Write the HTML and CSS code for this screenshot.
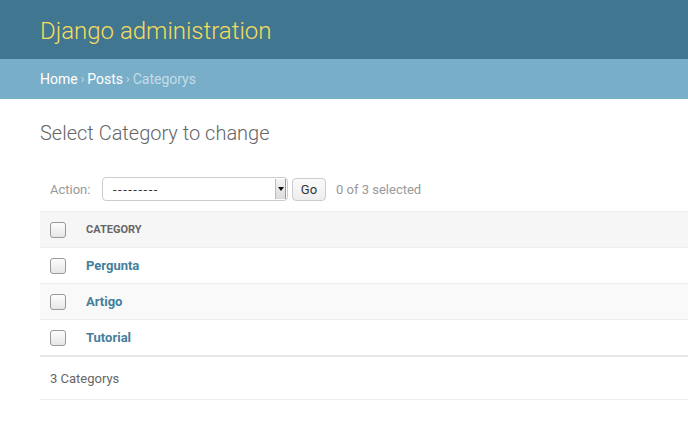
FILE: index.html
```html
<!DOCTYPE html>
<html>
<head>
<meta charset="utf-8">
<link rel="stylesheet" href="styles.css">
</head>
<body>
<div class="header">
  <h1 class="branding">Django administration</h1>
</div>
<div class="breadcrumbs">
  <a href="#">Home</a><span class="sep">›</span><a href="#">Posts</a><span class="sep">›</span><span class="current">Categorys</span>
</div>
<div class="content">
  <h1 class="title">Select Category to change</h1>
  <div class="actions">
    <label class="action-label">Action:</label>
    <div class="select">
      <span class="select-text">---------</span>
      <span class="select-btn"><span class="tri"></span></span>
    </div>
    <button class="go">Go</button>
    <span class="counter">0 of 3 selected</span>
  </div>
  <div class="results">
    <div class="row head"><span class="cb"><span class="box"></span></span><span class="col">CATEGORY</span></div>
    <div class="row"><span class="cb"><span class="box"></span></span><span class="col"><a href="#">Pergunta</a></span></div>
    <div class="row alt"><span class="cb"><span class="box"></span></span><span class="col"><a href="#">Artigo</a></span></div>
    <div class="row last"><span class="cb"><span class="box"></span></span><span class="col"><a href="#">Tutorial</a></span></div>
  </div>
  <p class="paginator">3 Categorys</p>
</div>
</body>
</html>
```

FILE: styles.css
```css
* { box-sizing: border-box; }
html, body { margin: 0; padding: 0; }
body {
  font-family: Roboto, "Liberation Sans", sans-serif;
  color: #333;
  background: #fff;
  font-size: 14px;
}
.header {
  height: 59px;
  background: #417690;
  padding: 0 40px;
  display: flex;
  align-items: center;
}
.branding {
  margin: 0;
  font-size: 24px;
  font-weight: 300;
  color: #f5dd5d;
  line-height: 30px;
  padding-top: 2px;
}
.breadcrumbs {
  height: 40px;
  background: #79aec8;
  padding: 0 40px;
  display: flex;
  align-items: center;
  font-size: 14px;
  color: #c4dce8;
}
.breadcrumbs a { color: #fff; text-decoration: none; }
.breadcrumbs .sep { margin: 0 3px; font-size: 12px; }
.content { padding: 20px 0 0 40px; }
.title {
  margin: 0 0 20px;
  font-size: 20px;
  font-weight: 300;
  color: #666;
  line-height: 28px;
}
.actions {
  height: 44px;
  padding: 0 10px;
  display: flex;
  align-items: center;
  font-size: 13px;
  color: #999;
}
.action-label { width: 52px; }
.select {
  width: 186px;
  height: 24px;
  border: 1px solid #ccc;
  border-radius: 4px;
  display: flex;
  align-items: center;
  justify-content: space-between;
  background: #fff;
  overflow: hidden;
}
.select-text { color: #333; padding-left: 10px; font-size: 13px; letter-spacing: 1.5px; }
.select-btn {
  width: 11px;
  height: 20px;
  margin-right: 1px;
  background: linear-gradient(#f4f4f4, #dcdcdc);
  border-left: 1px solid #bbb;
  border-right: 1px solid #999;
  display: flex;
  align-items: center;
  justify-content: center;
}
.tri {
  width: 0; height: 0;
  border-left: 3px solid transparent;
  border-right: 3px solid transparent;
  border-top: 4px solid #111;
}
.go {
  margin-left: 4px;
  height: 23px;
  width: 34px;
  border: 1px solid #ccc;
  border-radius: 4px;
  background: linear-gradient(#fafafa, #eee);
  font-family: Roboto, "Liberation Sans", sans-serif;
  font-size: 13px;
  color: #333;
  padding: 0;
}
.counter { margin-left: 10px; color: #999; }
.results { font-size: 13px; }
.row {
  display: flex;
  align-items: center;
  height: 36px;
  border-bottom: 1px solid #eee;
}
.row.head {
  height: 37px;
  background: #f6f6f6;
  border-top: 1px solid #eee;
  font-size: 11px;
  font-weight: 700;
  color: #666;
}
.row.alt { background: #f9f9f9; }
.row.last { border-bottom: 2px solid #e8e8e8; height: 37px; }
.cb {
  width: 26px;
  margin: 0 10px;
  display: flex;
  align-items: center;
}
.box {
  display: inline-block;
  width: 16px;
  height: 16px;
  border: 1px solid #999;
  border-radius: 3px;
  background: linear-gradient(#fdfdfd, #e6e6e6);
}
.results a {
  color: #447e9b;
  font-weight: 700;
  text-decoration: none;
}
.paginator {
  margin: 0;
  height: 43px;
  padding: 0 10px;
  display: flex;
  align-items: center;
  font-size: 13px;
  color: #666;
  border-bottom: 1px solid #eee;
}
```
